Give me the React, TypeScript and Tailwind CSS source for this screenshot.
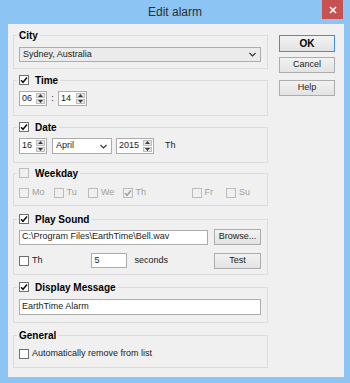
import React from 'react';
import { clsx } from 'clsx';

function Arrow({ up }: { up?: boolean }) {
  return (
    <svg width="5" height="3" viewBox="0 0 5 3" className="block">
      <path d={up ? 'M0 3 L2.5 0 L5 3 Z' : 'M0 0 L2.5 3 L5 0 Z'} fill="#3c3c3c" />
    </svg>
  );
}

function Chevron() {
  return (
    <svg width="7" height="5" viewBox="0 0 7 5" className="block">
      <path d="M0.5 1 L3.5 4 L6.5 1" stroke="#333" strokeWidth="1.1" fill="none" />
    </svg>
  );
}

function Spin({ value, className }: { value: string; className: string }) {
  return (
    <div className={clsx('flex border border-[#acacac] bg-white', className)}>
      <span className="flex flex-1 items-center pl-[2px]">{value}</span>
      <div className="my-px mr-px flex w-[9px] flex-col gap-px">
        <div className="flex flex-1 items-center justify-center border border-[#bdbdbd] bg-[#e6e6e6]">
          <Arrow up />
        </div>
        <div className="flex flex-1 items-center justify-center border border-[#bdbdbd] bg-[#e6e6e6]">
          <Arrow />
        </div>
      </div>
    </div>
  );
}

function Check({ checked, disabled }: { checked?: boolean; disabled?: boolean }) {
  return (
    <span
      className={clsx(
        'flex h-[10px] w-[10px] shrink-0 items-center justify-center border',
        disabled ? 'border-[#bcbcbc] bg-[#f0f0f0]' : 'border-[#707070] bg-white'
      )}
    >
      {checked && (
        <svg width="8" height="8" viewBox="0 0 8 8" className="block">
          <path
            d="M1 4.2 L3 6.3 L7 1.5"
            stroke={disabled ? '#a0a0a0' : '#111'}
            strokeWidth="1.5"
            fill="none"
          />
        </svg>
      )}
    </span>
  );
}

function Group({
  title,
  check,
  className,
  children,
}: {
  title: string;
  check?: 'on' | 'off';
  className: string;
  children: React.ReactNode;
}) {
  return (
    <div className={clsx('flex flex-col border border-[#dcdcdc] pl-[5px] pr-[6px]', className)}>
      <div className="-ml-[2px] -mt-[7px] flex h-[12px] items-center gap-[6px] self-start bg-[#f0f0f0] px-[2px]">
        {check && <Check checked={check === 'on'} disabled={check === 'off'} />}
        <span className="text-[10px] font-bold text-black">{title}</span>
      </div>
      {children}
    </div>
  );
}

function Button({ label, className }: { label: string; className?: string }) {
  return (
    <div
      className={clsx(
        'flex items-center justify-center border bg-gradient-to-b from-[#f2f2f2] to-[#e3e3e3]',
        className
      )}
    >
      {label}
    </div>
  );
}

const days: (null | { d: string; on?: boolean })[] = [
  { d: 'Mo' },
  { d: 'Tu' },
  { d: 'We' },
  { d: 'Th', on: true },
  null,
  { d: 'Fr' },
  { d: 'Su' },
];

export default function App() {
  return (
    <div className="flex h-[383px] w-[350px] flex-col bg-[#8cc4f3] font-['Liberation_Sans',Arial,sans-serif] text-[9px] text-[#1a1a1a]">
      {/* Title bar */}
      <div className="relative flex h-[24px] shrink-0 items-center justify-center">
        <span className="text-[12px] text-[#2f2f2f]">Edit alarm</span>
        <div className="absolute right-[7px] top-0 flex h-[19px] w-[21px] items-center justify-center bg-[#c75050]">
          <svg width="8" height="8" viewBox="0 0 8 8" className="block">
            <path d="M1 1 L7 7 M7 1 L1 7" stroke="#fff" strokeWidth="1.6" />
          </svg>
        </div>
      </div>

      {/* Client area */}
      <div className="mb-[6px] ml-[8px] mr-[6px] flex flex-1 bg-[#f0f0f0] pl-[5px] pt-[11px]">
        <div className="flex w-[255px] flex-col">
          <Group title="City" className="h-[34px]">
            <div className="mt-[6px] flex h-[15px] items-center justify-between border border-[#acacac] bg-[#ebebeb] pl-[3px] pr-[4px]">
              <span>Sydney, Australia</span>
              <Chevron />
            </div>
          </Group>

          <Group title="Time" check="on" className="mt-[11px] h-[36px]">
            <div className="mt-[5px] flex items-center">
              <Spin value="06" className="h-[15px] w-[28px]" />
              <span className="w-[11px] text-center">:</span>
              <Spin value="14" className="h-[15px] w-[29px]" />
            </div>
          </Group>

          <Group title="Date" check="on" className="mt-[11px] h-[36px]">
            <div className="mt-[5px] flex items-center">
              <Spin value="16" className="h-[16px] w-[28px]" />
              <div className="ml-[5px] flex h-[16px] w-[60px] items-center justify-between border border-[#acacac] bg-white pl-[3px] pr-[4px]">
                <span>April</span>
                <Chevron />
              </div>
              <Spin value="2015" className="ml-[4px] h-[16px] w-[38px]" />
              <span className="ml-[11px]">Th</span>
            </div>
          </Group>

          <Group title="Weekday" check="off" className="mt-[10px] h-[33px]">
            <div className="mt-[7px] grid h-[10px] grid-cols-[repeat(7,34.5px)] items-center text-[#a0a0a0]">
              {days.map((x, i) =>
                x ? (
                  <div key={i} className="flex items-center gap-[3px]">
                    <Check checked={x.on} disabled />
                    <span>{x.d}</span>
                  </div>
                ) : (
                  <div key={i} />
                )
              )}
            </div>
          </Group>

          <Group title="Play Sound" check="on" className="mt-[13px] h-[56px]">
            <div className="mt-[4px] flex items-center">
              <div className="flex h-[15px] w-[189px] items-center border border-[#acacac] bg-white pl-[2px]">
                C:\Program Files\EarthTime\Bell.wav
              </div>
              <Button label="Browse..." className="ml-[6px] h-[16px] w-[47px] border-[#acacac]" />
            </div>
            <div className="mt-[7px] flex h-[17px] items-center">
              <Check />
              <span className="ml-[3px]">Th</span>
              <div className="ml-[48px] flex h-[15px] w-[36px] items-center border border-[#acacac] bg-white pl-[3px]">
                5
              </div>
              <span className="ml-[8px]">seconds</span>
              <Button label="Test" className="ml-auto h-[16px] w-[47px] border-[#acacac]" />
            </div>
          </Group>

          <Group title="Display Message" check="on" className="mt-[12px] h-[36px]">
            <div className="mt-[6px] flex h-[16px] items-center border border-[#acacac] bg-white pl-[2px]">
              EarthTime Alarm
            </div>
          </Group>

          <Group title="General" className="mt-[12px] h-[33px]">
            <div className="mt-[6px] flex items-center gap-[3px]">
              <Check />
              <span>Automatically remove from list</span>
            </div>
          </Group>
        </div>

        <div className="ml-[11px] flex w-[56px] flex-col">
          <Button label="OK" className="h-[17px] border-[#3c8fdc] text-[10px] font-bold text-black" />
          <Button label="Cancel" className="mt-[5px] h-[16px] border-[#acacac]" />
          <Button label="Help" className="mt-[7px] h-[16px] border-[#acacac]" />
        </div>
      </div>
    </div>
  );
}
